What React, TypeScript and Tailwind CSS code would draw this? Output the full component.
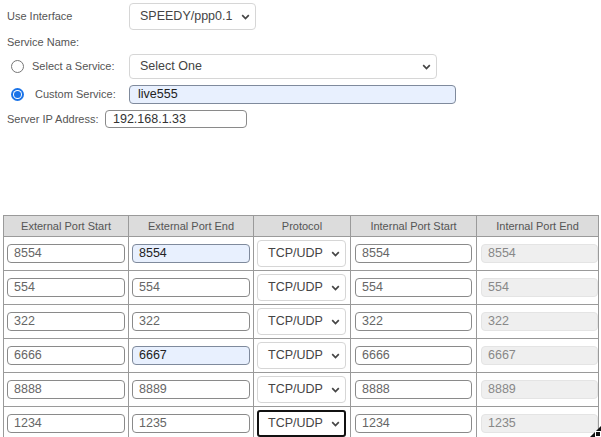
import React from 'react';

const rows = [
  { extStart: '8554', extEnd: '8554', intStart: '8554', intEnd: '8554', filled: true },
  { extStart: '554', extEnd: '554', intStart: '554', intEnd: '554', filled: false },
  { extStart: '322', extEnd: '322', intStart: '322', intEnd: '322', filled: false },
  { extStart: '6666', extEnd: '6667', intStart: '6666', intEnd: '6667', filled: true },
  { extStart: '8888', extEnd: '8889', intStart: '8888', intEnd: '8889', filled: false },
  { extStart: '1234', extEnd: '1235', intStart: '1234', intEnd: '1235', filled: false },
];

const Chevron = () => (
  <svg width="9" height="6" viewBox="0 0 9 6" className="shrink-0">
    <path d="M1.2 1.2 L4.5 4.5 L7.8 1.2" fill="none" stroke="#444" strokeWidth="1.7" />
  </svg>
);

const Select = ({ value, className = '', focused = false }: { value: string; className?: string; focused?: boolean }) => (
  <div
    className={`flex items-center justify-between bg-white text-[12.5px] text-[#444] ${
      focused ? 'border-2 border-[#111] rounded-[3px] pl-[9px] pr-[4px]' : 'border border-[#d6d6d6] rounded-[4px] pl-[10px] pr-[5px]'
    } ${className}`}
  >
    <span>{value}</span>
    <Chevron />
  </div>
);

const Field = ({ value, filled = false, disabled = false, className = '' }: { value: string; filled?: boolean; disabled?: boolean; className?: string }) => (
  <div
    className={`flex items-center px-[6px] text-[12.5px] rounded-[4px] border ${
      disabled
        ? 'bg-[#efefef] border-[#e4e4e4] text-[#888]'
        : filled
        ? 'bg-[#e8f0fe] border-[#7f8a9c] text-[#222]'
        : 'bg-white border-[#8a8a8a] text-[#666]'
    } ${className}`}
  >
    {value}
  </div>
);

const Radio = ({ checked }: { checked: boolean }) =>
  checked ? (
    <span className="w-[13px] h-[13px] rounded-full bg-[#1a73e8] flex items-center justify-center shrink-0">
      <span className="w-[9px] h-[9px] rounded-full bg-white flex items-center justify-center">
        <span className="w-[7px] h-[7px] rounded-full bg-[#1a73e8]" />
      </span>
    </span>
  ) : (
    <span className="w-[13px] h-[13px] rounded-full border border-[#767676] bg-white shrink-0" />
  );

export default function App() {
  return (
    <div
      className="w-[601px] h-[437px] bg-white overflow-hidden relative"
      style={{ fontFamily: '"Liberation Sans", Arial, sans-serif' }}
    >
      {/* Service form */}
      <div className="pl-[7px] pt-[3px] text-[11px] text-[#555]">
        <div className="flex items-center h-[27px]">
          <span className="w-[122px]">Use Interface</span>
          <Select value="SPEEDY/ppp0.1" className="w-[127px] h-[27px]" />
        </div>
        <div className="flex items-center h-[24px]">Service Name:</div>
        <div className="flex items-center h-[25px]">
          <span className="ml-[4px] mr-[8px] flex">
            <Radio checked={false} />
          </span>
          <span className="w-[97px]">Select a Service:</span>
          <Select value="Select One" className="w-[308px] h-[25px]" />
        </div>
        <div className="flex items-center h-[19px] mt-[6px]">
          <span className="ml-[4px] mr-[11px] flex">
            <Radio checked={true} />
          </span>
          <span className="w-[94px]">Custom Service:</span>
          <Field value="live555" filled className="w-[327px] h-[19px] !px-[8px]" />
        </div>
        <div className="flex items-center h-[18px] mt-[6px]">
          <span className="w-[98px]">Server IP Address:</span>
          <Field value="192.168.1.33" className="w-[142px] h-[18px] !text-[#333] !px-[7px]" />
        </div>
      </div>

      {/* Port mapping table */}
      <table className="absolute left-[3px] top-[215px] border-collapse text-[11px] table-fixed w-[595px]">
        <colgroup>
          <col className="w-[125px]" />
          <col className="w-[125px]" />
          <col className="w-[97px]" />
          <col className="w-[126px]" />
          <col className="w-[122px]" />
        </colgroup>
        <thead>
          <tr className="h-[21px] bg-[#dcdcdc] text-[#555]">
            {['External Port Start', 'External Port End', 'Protocol', 'Internal Port Start', 'Internal Port End'].map((h) => (
              <th key={h} className="border border-[#9a9a9a] font-normal p-0 text-center">
                {h}
              </th>
            ))}
          </tr>
        </thead>
        <tbody>
          {rows.map((r, i) => (
            <tr key={i} className="h-[34px]">
              <td className="border border-[#9a9a9a] px-[3px]">
                <Field value={r.extStart} className="h-[19px]" />
              </td>
              <td className="border border-[#9a9a9a] px-[3px]">
                <Field value={r.extEnd} filled={r.filled} className="h-[19px]" />
              </td>
              <td className="border border-[#9a9a9a] px-[3px]">
                <Select value="TCP/UDP" focused={i === rows.length - 1} className="w-[89px] h-[27px]" />
              </td>
              <td className="border border-[#9a9a9a] px-[4px]">
                <Field value={r.intStart} className="h-[19px]" />
              </td>
              <td className="border border-[#9a9a9a] pl-[4px] pr-0">
                <Field value={r.intEnd} disabled className="h-[19px]" />
              </td>
            </tr>
          ))}
        </tbody>
      </table>

      {/* resize grip */}
      <svg className="absolute right-0 bottom-0" width="11" height="11" viewBox="0 0 11 11">
        <path d="M0 11 L11 0 L11 11 Z" fill="#111" />
        <rect x="5.5" y="5.5" width="5" height="5" fill="none" stroke="#fff" strokeWidth="1" />
      </svg>
    </div>
  );
}
